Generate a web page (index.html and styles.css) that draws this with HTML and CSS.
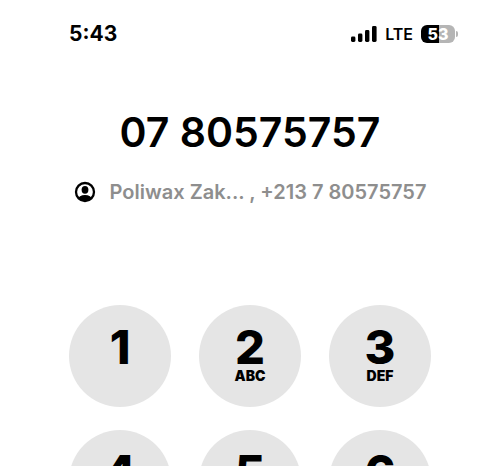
FILE: index.html
```html
<!DOCTYPE html>
<html lang="en">
<head>
  <meta charset="utf-8">
  <meta name="viewport" content="width=device-width, initial-scale=1">
  <title>Phone</title>
  <link rel="stylesheet" href="styles.css">
</head>
<body>
  <header class="status">
    <time class="clock">5:43</time>
    <div class="indicators">
      <svg class="signal" viewBox="0 0 26 16" aria-hidden="true">
        <rect x="0" y="10.5" width="4.4" height="5.5" rx="1.4"/>
        <rect x="7" y="7.5" width="4.4" height="8.5" rx="1.4"/>
        <rect x="14" y="4" width="4.4" height="12" rx="1.4"/>
        <rect x="21" y="0" width="4.6" height="16" rx="1.4"/>
      </svg>
      <span class="network">LTE</span>
      <span class="battery"><span class="cell">53</span><span class="tip"></span></span>
    </div>
  </header>
  <main class="dialer">
    <h1 class="number">07 80575757</h1>
    <p class="contact">
      <svg class="person" viewBox="0 0 22 22" aria-hidden="true">
        <defs><clipPath id="ring"><circle cx="11" cy="11" r="9"/></clipPath></defs>
        <circle cx="11" cy="11" r="9" fill="none" stroke="#000" stroke-width="2.3"/>
        <ellipse cx="11" cy="8.8" rx="3.4" ry="3.9"/>
        <ellipse cx="11" cy="18.6" rx="7" ry="4.6" clip-path="url(#ring)"/>
      </svg>
      <span>Poliwax Zak... , +213 7 80575757</span>
    </p>
    <div class="keypad">
      <button class="key" type="button"><span class="digit">1</span></button>
      <button class="key" type="button"><span class="digit">2</span><span class="letters">ABC</span></button>
      <button class="key" type="button"><span class="digit">3</span><span class="letters">DEF</span></button>
      <button class="key" type="button"><span class="digit">4</span></button>
      <button class="key" type="button"><span class="digit">5</span></button>
      <button class="key" type="button"><span class="digit">6</span></button>
    </div>
  </main>
</body>
</html>
```
FILE: styles.css
```css
* {
  box-sizing: border-box;
}

html {
  height: 100%;
}

body {
  height: 100%;
  margin: 0;
  overflow: hidden;
  background: #fff;
  color: #000;
  font-family: Inter, "Liberation Sans", sans-serif;
}

.status {
  display: flex;
  justify-content: space-between;
  align-items: center;
  padding: 20px 42px 0 69px;
  line-height: 28px;
}

.clock {
  font-size: 21px;
  font-weight: 700;
}

.indicators {
  display: flex;
  align-items: center;
  gap: 8px;
}

.signal {
  width: 26px;
  height: 16px;
}

.network {
  font-size: 16px;
  font-weight: 600;
}

.battery {
  display: flex;
  align-items: center;
  gap: 1px;
}

.cell {
  width: 34px;
  border-radius: 6px;
  background: linear-gradient(90deg, #000 53%, #b5b5b5 53%);
  color: #fff;
  font-size: 16px;
  font-weight: 800;
  line-height: 18px;
  text-align: center;
}

.tip {
  width: 2px;
  height: 6px;
  border-radius: 0 2px 2px 0;
  background: #b5b5b5;
}

.dialer {
  display: flex;
  flex-direction: column;
  align-items: center;
  padding-top: 58px;
}

.number {
  margin: 0;
  font-size: 41px;
  font-weight: 600;
  line-height: 52px;
}

.contact {
  display: flex;
  align-items: center;
  gap: 14px;
  margin: 20px 0 99px;
  color: #8e8e8e;
  font-size: 20px;
  font-weight: 600;
  line-height: 28px;
  white-space: nowrap;
}

.person {
  width: 22px;
  height: 22px;
}

.keypad {
  display: grid;
  grid-template-columns: repeat(3, 102px);
  gap: 23px 28px;
}

.key {
  display: flex;
  flex-direction: column;
  align-items: center;
  aspect-ratio: 1;
  padding: 19px 0 0;
  border: 0;
  border-radius: 50%;
  background: #e5e5e5;
  color: #000;
  font-family: inherit;
}

.digit {
  font-size: 47px;
  font-weight: 800;
  line-height: 46px;
}

.letters {
  font-size: 14px;
  font-weight: 900;
  line-height: 12px;
}
```
